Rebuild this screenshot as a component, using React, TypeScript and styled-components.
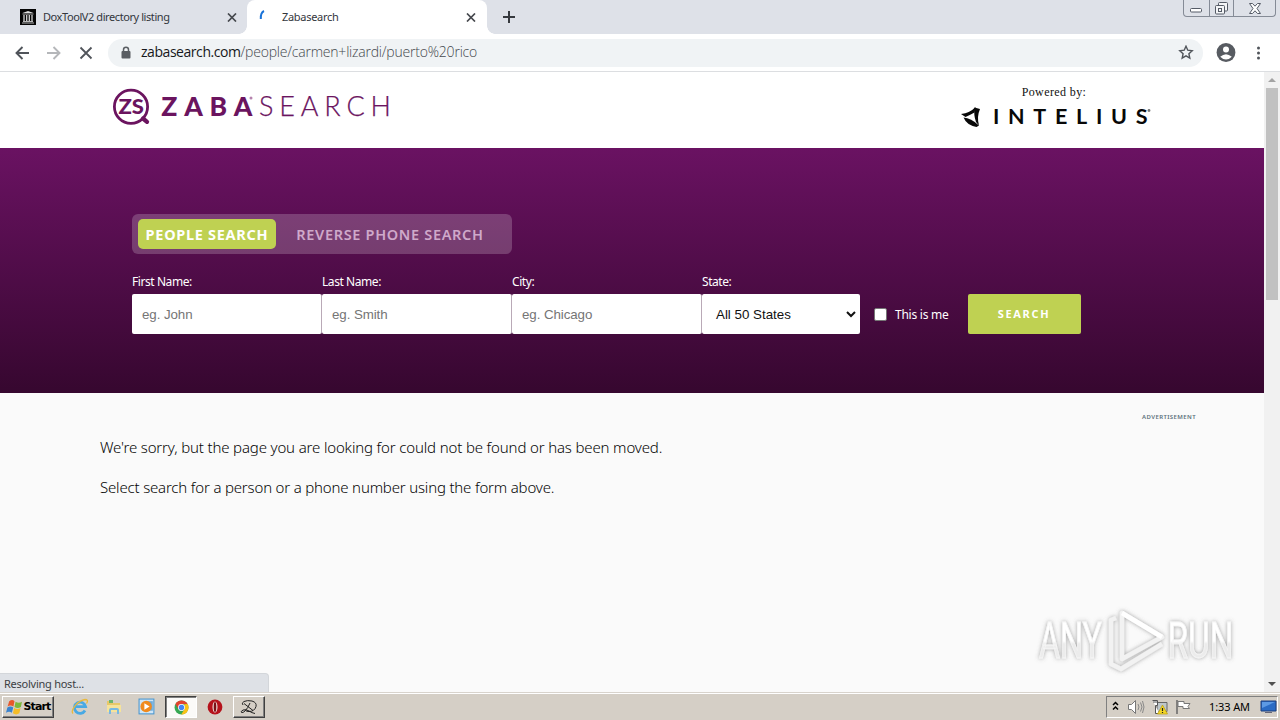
import React from "react";
import styled, { createGlobalStyle } from "styled-components";

const Global = createGlobalStyle`
  * { box-sizing: border-box; }
  html, body { margin: 0; padding: 0; overflow: hidden; }
  body { font-family: "Noto Sans", "Open Sans", sans-serif; }
  button, input { font: inherit; border: 0; padding: 0; margin: 0; background: none; }
`;

const Screen = styled.div`
  width: 1280px; height: 720px; display: flex; flex-direction: column; overflow: hidden;
  position: relative; background: #fafafa;
`;

/* Browser chrome */
const TabStrip = styled.div`
  height: 34px; flex: none; background: #dee1e8; display: flex; align-items: stretch;
`;
const Tab = styled.div<{ $active?: boolean; $w: number; $pad: number; $end: number }>`
  width: ${p => p.$w}px; display: flex; align-items: center; position: relative;
  padding: 0 ${p => p.$end}px 0 ${p => p.$pad}px;
  background: ${p => (p.$active ? "#fff" : "transparent")};
  border-radius: 8px 8px 0 0;
  svg { flex: none; display: block; }
  ${p => p.$active && `
    &::before, &::after { content: ""; position: absolute; bottom: 0; width: 8px; height: 8px; }
    &::before { left: -8px; background: radial-gradient(circle at 0 0, transparent 7.5px, #fff 8px); }
    &::after { right: -8px; background: radial-gradient(circle at 100% 0, transparent 7.5px, #fff 8px); }
  `}
`;
const TabTitle = styled.span<{ $ls?: number; $gap?: number }>`
  flex: 1; margin-left: ${p => p.$gap ?? 8}px; font: 11px/16px "Noto Sans", sans-serif; color: #33363c;
  letter-spacing: ${p => p.$ls ?? 0}px; white-space: nowrap;
`;
const NewTab = styled.div`
  width: 44px; display: flex; align-items: center; justify-content: center;
`;
const WindowButtons = styled.div`
  margin-left: auto; margin-right: 4px; height: 17px; width: 93px; display: flex;
  border: 1px solid #858b96; border-top: 0; border-radius: 0 0 4px 4px; overflow: hidden;
`;
const WindowButton = styled.div<{ $w: number }>`
  width: ${p => p.$w}px; display: flex; align-items: center; justify-content: center;
  & + & { border-left: 1px solid #858b96; }
`;
const Toolbar = styled.div`
  height: 38px; flex: none; background: #fff; border-bottom: 1px solid #dcdee1;
  display: flex; align-items: center; padding: 0 13px 0 12px;
`;
const NavIcon = styled.div`
  width: 20px; height: 20px; margin-right: 12px; display: flex; align-items: center; justify-content: center;
`;
const AddressBar = styled.div`
  width: 1095px; height: 28px; border-radius: 14px; background: #f0f3f5;
  display: flex; align-items: center; padding: 0 9px 0 12px;
`;
const Url = styled.span`
  flex: 1; margin-left: 9px; font: 300 14px/20px "Open Sans", sans-serif; color: #44484d;
  letter-spacing: -0.21px; white-space: nowrap; padding-bottom: 1px;
  b { font-weight: 400; color: #16181b; letter-spacing: -0.45px; }
`;
const ToolbarEnd = styled.div`
  flex: 1; display: flex; align-items: center; justify-content: space-between; padding-left: 13px;
`;

/* Page */
const Viewport = styled.div`height: 620px; flex: none; display: flex;`;
const Page = styled.main`width: 1264px; display: flex; flex-direction: column;`;
const Header = styled.header`
  height: 76px; background: #fff; display: flex; justify-content: space-between;
  padding: 12px 110px 0 110px;
`;
const Powered = styled.div`
  width: 200px; display: flex; flex-direction: column; align-items: center;
  span { font: 12px/16px "Liberation Serif", serif; color: #111; letter-spacing: 0.4px; }
  svg { display: block; margin-top: 4px; }
`;
const Hero = styled.section`
  height: 245px; padding: 66px 132px 0; color: #fff;
  background: linear-gradient(#6a1262, #36072f);
`;
const Modes = styled.div`
  width: 380px; height: 40px; border-radius: 6px; padding: 5px 6px; display: flex;
  background: rgba(255, 255, 255, 0.2);
`;
const Mode = styled.button<{ $on?: boolean; $w: number; $ls: number }>`
  width: ${p => p.$w}px; height: 30px; border-radius: 5px; text-align: center; white-space: nowrap;
  background: ${p => (p.$on ? "#bfd152" : "transparent")};
  color: ${p => (p.$on ? "#fff" : "#cfa9ca")};
  font: ${p => (p.$on ? 700 : 600)} 14.5px/31px "Noto Sans", sans-serif; letter-spacing: ${p => p.$ls}px;
`;
const Form = styled.div`display: flex; margin-top: 19px; align-items: flex-end;`;
const Field = styled.label<{ $w: number }>`
  width: ${p => p.$w}px; display: flex; flex-direction: column;
`;
const FieldLabel = styled.span`
  font: 12px/17px "Noto Sans", sans-serif; letter-spacing: -0.43px; margin-bottom: 4px; white-space: nowrap;
`;
const Input = styled.input`
  height: 40px; width: 100%; background: #fff; border-right: 1px solid #b9a9b7; border-radius: 2px;
  padding: 0 10px; font: 13.33px "Liberation Sans", Arial, sans-serif; letter-spacing: -0.08px;
  &::placeholder { color: #757575; opacity: 1; }
`;
const SelectBox = styled.div`
  height: 40px; background: #fff; border-radius: 2px; color: #111; display: flex; align-items: center;
  justify-content: space-between; padding: 0 4px 0 14px;
  font: 13.33px "Liberation Sans", Arial, sans-serif; letter-spacing: 0;
`;
const ThisIsMe = styled.div`
  height: 40px; width: 108px; padding-left: 14px; display: flex; align-items: center; gap: 8px;
  font: 12px/17px "Noto Sans", sans-serif; white-space: nowrap; letter-spacing: -0.25px;
`;
const Check = styled.span`
  width: 13px; height: 13px; background: #fff; border: 1px solid #767676; border-radius: 2px; flex: none;
`;
const SearchButton = styled.button`
  width: 113px; height: 40px; border-radius: 2px; background: #bfd152; color: #fff;
  font: 700 11px/40px "Noto Sans", sans-serif; letter-spacing: 1.7px; padding-right: 1px; text-align: center;
`;
const Body = styled.section`flex: 1; background: #fafafa; padding: 19px 68px 0 100px;`;
const Advert = styled.div`
  font: 600 6px/10px "Noto Sans", sans-serif; letter-spacing: 0.4px; text-align: right; color: #5d727c;
`;
const Message = styled.p<{ $ls: number }>`
  margin: 0; height: 40px; font: 300 15px/20px "Noto Sans", "Open Sans", sans-serif; color: #050505;
  letter-spacing: ${p => p.$ls}px; white-space: nowrap;
`;
const Messages = styled.div`padding-top: 15px;`;
const Scrollbar = styled.div`
  width: 16px; background: #f1f1f1; display: flex; flex-direction: column; align-items: center;
`;
const Arrow = styled.div<{ $down?: boolean }>`
  height: 16px; display: flex; align-items: center;
  &::before {
    content: ""; border: 4px solid transparent; border-top-width: ${p => (p.$down ? 4 : 0)}px;
    border-bottom-width: ${p => (p.$down ? 0 : 4)}px;
    ${p => (p.$down ? "border-top-color: #505050" : "border-bottom-color: #a3a3a3")};
  }
`;
const Thumb = styled.div`width: 12px; height: 212px; background: #c1c1c1; margin-bottom: auto;`;

/* Overlays */
const Status = styled.div`
  position: absolute; left: 0; top: 673px; width: 269px; height: 19px; background: #dee1e6;
  border-radius: 0 4px 0 0; padding-left: 4px; font: 11px/19px "Noto Sans", sans-serif; color: #3c4043;
  border-top: 1px solid #d3d6da; border-right: 1px solid #d3d6da; letter-spacing: -0.25px;
`;
const Watermark = styled.svg`position: absolute; left: 1030px; top: 598px;`;

/* Taskbar */
const Taskbar = styled.div`
  height: 28px; flex: none; background: #d5cfc6; border-top: 1px solid #d8d3cc;
  box-shadow: inset 0 1px #fff; display: flex; align-items: center; padding: 1px 2px 0 2px;
`;
const TaskButton = styled.div<{ $w: number; $ml?: number; $kind?: "raised" | "pressed" }>`
  width: ${p => p.$w}px; height: 22px; margin-left: ${p => p.$ml ?? 0}px; flex: none;
  display: flex; align-items: center; justify-content: center;
  background: ${p => (p.$kind === "pressed" ? "#fbfaf8" : "transparent")};
  border: ${p => (p.$kind ? 1 : 0)}px solid;
  border-color: ${p => (p.$kind === "pressed" ? "#404040 #fff #fff #404040" : "#fff #404040 #404040 #fff")};
  box-shadow: ${p => (p.$kind === "raised" ? "inset -1px -1px #808080" : p.$kind ? "inset 1px 1px #808080" : "none")};
  svg { display: block; }
`;
const StartText = styled.span`
  font: 700 11px/18px "DejaVu Sans", sans-serif; color: #000; letter-spacing: -0.9px; margin-left: 1px;
`;
const Tray = styled.div`
  margin-left: auto; width: 172px; height: 22px; border: 1px solid; border-color: #808080 #fff #fff #808080;
  display: flex; align-items: center; padding: 0 0 0 4px;
  svg { display: block; flex: none; }
`;
const TrayIcon = styled.svg`margin-left: 6px;`;
const Clock = styled.span`
  font: 11px/18px "Noto Sans", sans-serif; color: #000; margin-left: auto; margin-right: 10px;
  letter-spacing: -0.1px; white-space: nowrap;
`;

const TabClose = () => (
  <svg width="14" height="9">
    <g transform="translate(3 .5)"><path d="M0 0l8 8M8 0 0 8" stroke="#45484d" strokeWidth="1.700" /></g>
  </svg>
);

const MuseumIcon = () => (
  <svg width="16" height="16" viewBox="0 0 16 16">
    <rect width="16" height="16" fill="#050505" />
    <path d="M2.500 4 8 2l5.500 2z" fill="#ddd" />
    <path d="M2.500 5h11M2 14h12M3 12.500h10" stroke="#ccc" strokeWidth=".9" />
    <path d="M4 6v6M6.700 6v6M9.300 6v6M12 6v6" stroke="#d5d5d5" strokeWidth="1.300" />
  </svg>
);

const ZabaLogo = () => (
  <svg width="282" height="46" viewBox="0 0 282 46">
    <g stroke="#6b145f" fill="none">
      <circle cx="21" cy="22.700" r="16.600" strokeWidth="2.800" />
      <path d="M33 34.500l4 3.300" strokeWidth="4.300" strokeLinecap="round" />
    </g>
    <g fill="#6b145f" fontFamily="Lato, sans-serif">
      <text x="8.500" y="29.800" fontSize="20" fontWeight="900" textLength="25.500" lengthAdjust="spacingAndGlyphs">ZS</text>
      <text x="51.300" y="32" fontSize="26.500" fontWeight="900" textLength="91">ZABA</text>
      <text x="149" y="32" fontSize="27" fontWeight="300" stroke="#6b145f" strokeWidth=".25" textLength="132">SEARCH</text>
      <circle cx="141" cy="14" r="1.500" fill="#b684ae" />
    </g>
  </svg>
);

const InteliusLogo = () => (
  <svg width="200" height="26" viewBox="0 0 200 26">
    <g fill="#080808">
      <path d="M7 10Q16 9 21.500 3L20.500 8.500Q16 11 11.500 13z" />
      <path d="M20.500 3.500L26 5Q22.500 13 25 21.500L22 18Q19.500 11 20.500 3.500z" />
      <path d="M9.500 13.500Q17 14 25 21.500L22.500 23Q12.500 21 9.500 13.500z" />
    </g>
    <text x="39" y="20" fontFamily="Lato, sans-serif" fontWeight="700" fontSize="21.500" textLength="154.500" fill="#080808">INTELIUS</text>
    <circle cx="195" cy="6.500" r="1.400" fill="#777" />
  </svg>
);

const AnyRun = () => (
  <Watermark width="222" height="84" viewBox="0 0 222 84">
    <defs>
      <linearGradient id="face" x1="0" y1="0" x2="0" y2="1">
        <stop offset=".5" stopColor="#fff" />
        <stop offset=".55" stopColor="#ececec" />
      </linearGradient>
      <filter id="glow" x="-10%" y="-20%" width="120%" height="140%">
        <feDropShadow dx="0" dy="0" stdDeviation="2" floodColor="#666" floodOpacity=".6" />
      </filter>
    </defs>
    <g filter="url(#glow)">
      <g fill="url(#face)" stroke="#f6f6f6" strokeWidth=".8" fontFamily="Roboto, sans-serif" fontWeight="400" fontSize="50">
        <text x="9" y="60" textLength="63" lengthAdjust="spacingAndGlyphs">ANY</text>
        <text x="137.500" y="60" textLength="66" lengthAdjust="spacingAndGlyphs">RUN</text>
      </g>
      <g fill="none" stroke="#f2f2f2" strokeWidth="4.500" strokeLinejoin="round">
        <path d="M86 20L81 22V66L91 71L132 46" />
        <path d="M92 15V61L132 39z" />
        <path d="M92 15L132 39" stroke="#fff" />
      </g>
    </g>
  </Watermark>
);

const StartFlag = () => (
  <svg width="17" height="17" viewBox="0 0 16 16">
    <path d="M3 2q3-2 5 0L7 7Q4 5 1.500 7z" fill="#e8582b" />
    <path d="M9 2.500q3 2 6 0L14 7.500q-3 2-6 0z" fill="#7cb93b" />
    <path d="M1.300 8q3-2 5.500 0L5.500 13Q3 11 0 13z" fill="#3a83cf" />
    <path d="M7.700 8.500q3 2 6 0L12.500 13.500q-3 2-6 0z" fill="#f5bd27" />
  </svg>
);

const IeIcon = () => (
  <svg width="18" height="18" viewBox="0 0 18 18" fill="none">
    <path d="M14 12.500A5.600 5.600 0 1 1 14.600 8.700H5" stroke="#48a9e4" strokeWidth="2.800" />
    <path d="M2 15.500C-1 12 7 2.500 14 1.500q4 0 1.500 4" stroke="#e9b93c" strokeWidth="1.300" />
  </svg>
);

const FolderIcon = () => (
  <svg width="18" height="18" viewBox="0 0 18 18">
    <path d="M2 3h5l1 2h7v9H2z" fill="#e8c868" /><path d="M4 2h4v3H4z" fill="#6cb56a" />
    <path d="M2 7h14v7H2z" fill="#f6e39a" />
    <path d="M4 16v-4q0-2 2-2h6q2 0 2 2v4h-2v-4H6v4z" fill="#77b9e2" />
  </svg>
);

const MediaIcon = () => (
  <svg width="18" height="18" viewBox="0 0 17 17">
    <rect x="1" y="1" width="14" height="14" fill="#cfe6f7" stroke="#4a96cf" />
    <path d="M9 3h5v9H9z" fill="#6aabdc" /><circle cx="7.700" cy="8" r="5.400" fill="#f08a1d" />
    <path d="M6 5l5 3-5 3z" fill="#fff" />
  </svg>
);

const ChromeIcon = () => (
  <svg width="15" height="15" viewBox="0 0 14 14">
    <circle cx="7" cy="7" r="6.500" fill="#36a853" />
    <path d="M1.300 3.800A6.500 6.500 0 0 1 12.700 3.800H7L4.300 8.600z" fill="#e2432f" />
    <path d="M12.700 3.800A6.500 6.500 0 0 1 6.700 13.500L9.800 8.600 9.500 4z" fill="#fbc116" />
    <circle cx="7" cy="7" r="3.200" fill="#fff" /><circle cx="7" cy="7" r="2.500" fill="#4285f4" />
  </svg>
);

const OperaIcon = () => (
  <svg width="16" height="16" viewBox="0 0 16 16">
    <ellipse cx="8" cy="8" rx="7.400" ry="7.500" fill="#b5121b" />
    <ellipse cx="8" cy="8" rx="2.500" ry="5.500" fill="#f0dcd8" />
    <ellipse cx="8" cy="8" rx="1.300" ry="5" fill="#7a1015" />
  </svg>
);

const ScriptIcon = () => (
  <svg width="18" height="16" viewBox="0 0 18 16" fill="none" stroke="#222" strokeWidth="1">
    <path d="M3 6Q1 4 4 2.500T12 2q5 1.500 4 5.500-1.500 5-7 5-2.500 0-3.500-1M10 4Q8 9 5 12q-2 2-3.500 1.500T3 11q3-1 6 1t6 2.500M4 4.500l9 7" />
  </svg>
);

const TrayIcons = () => (
  <>
    <svg width="10" height="16" viewBox="0 0 10 16" fill="none" stroke="#000" strokeWidth="1.500">
      <path d="M2 6l2.500-2.500L7 6M2 10.500 4.500 8 7 10.500" />
    </svg>
    <TrayIcon width="18" height="16" viewBox="0 0 18 16" fill="none" stroke="#777">
      <path d="M1.500 5.500h3l4-4v13l-4-4h-3z" fill="#fff" />
      <path d="M11 5q2 3 0 6M13.500 3.500q3 4.500 0 9M15.500 2q3 6 0 12" stroke="#888" />
    </TrayIcon>
    <TrayIcon width="18" height="16" viewBox="0 0 18 16">
      <path d="M6 3.500h10v9H6z" fill="#bfc7ca" stroke="#666" />
      <path d="M1.500 1.500h5v5h-2v8h4M3 1v3M5 1v3" fill="#fff" stroke="#555" />
      <path d="M11.500 6l5 9h-10z" fill="#f3d625" stroke="#b99b0a" strokeWidth=".7" />
      <path d="M11.500 9v3M11.500 13v1" stroke="#222" strokeWidth="1.200" />
    </TrayIcon>
    <TrayIcon width="18" height="16" viewBox="0 0 18 16">
      <path d="M2 1v14" stroke="#666" strokeWidth="1.500" />
      <path d="M3 2.500h6v2h6l-2 3 1.500 2H8v-2H3z" fill="#fff" stroke="#777" />
    </TrayIcon>
  </>
);

const fields = [
  { label: "First Name:", hint: "eg. John" },
  { label: "Last Name:", hint: "eg. Smith" },
  { label: "City:", hint: "eg. Chicago" },
];

export default function App() {
  return (
    <Screen>
      <Global />
      <TabStrip>
        <Tab $w={247} $pad={20} $end={8}>
          <MuseumIcon />
          <TabTitle $ls={-0.42} $gap={7}>DoxToolV2 directory listing</TabTitle>
          <TabClose />
        </Tab>
        <Tab $w={240} $pad={11} $end={9} $active>
          <svg width="16" height="16" viewBox="0 0 16 16" fill="none">
            <path d="M6 2Q2.500 3.500 2.800 10" stroke="#1a73d8" strokeWidth="2" />
          </svg>
          <TabTitle $ls={-0.3}>Zabasearch</TabTitle>
          <TabClose />
        </Tab>
        <NewTab>
          <svg width="12" height="12" stroke="#36393e" strokeWidth="2"><path d="M6 0v12M0 6h12" /></svg>
        </NewTab>
        <WindowButtons>
          <WindowButton $w={25}>
            <svg width="12" height="16" fill="#fff" stroke="#555b66"><rect x=".5" y="8.500" width="11" height="3.500" rx="1" /></svg>
          </WindowButton>
          <WindowButton $w={25}>
            <svg width="13" height="13" fill="#f4f5f7" stroke="#555b66">
              <rect x="3.500" y=".5" width="9" height="8.500" rx="1" /><rect x=".5" y="3.500" width="9" height="8.500" rx="1" />
              <rect x="3.500" y="6.500" width="3" height="3" />
            </svg>
          </WindowButton>
          <WindowButton $w={42}>
            <svg width="12" height="11" viewBox="0 0 12 11" fill="#fff" stroke="#555b66">
              <path d="M.5.5h3L6 3.200 8.500.5h3L8 5.500l3.500 5h-3L6 7.800 3.500 10.500h-3L4 5.500z" />
            </svg>
          </WindowButton>
        </WindowButtons>
      </TabStrip>
      <Toolbar>
        <NavIcon>
          <svg width="14" height="14" fill="none" stroke="#50545a" strokeWidth="1.900"><path d="M14 7H1.500M7.500 1l-6 6 6 6" /></svg>
        </NavIcon>
        <NavIcon>
          <svg width="14" height="14" fill="none" stroke="#b5b7ba" strokeWidth="1.900"><path d="M0 7h12.500M6.500 1l6 6-6 6" /></svg>
        </NavIcon>
        <NavIcon>
          <svg width="14" height="14" stroke="#50545a" strokeWidth="1.800"><path d="M1.500 1.500l11 11M12.500 1.500l-11 11" /></svg>
        </NavIcon>
        <AddressBar>
          <svg width="12" height="14" viewBox="0 0 12 14">
            <path d="M3.500 6V3.800a2.500 2.500 0 0 1 5 0V6" fill="none" stroke="#5a5e63" strokeWidth="1.500" />
            <rect x="1.500" y="5" width="9" height="7.500" rx="1" fill="#5a5e63" />
          </svg>
          <Url><b>zabasearch.com</b>/people/carmen+lizardi/puerto%20rico</Url>
          <svg width="16" height="16" viewBox="0 0 16 16" fill="none" stroke="#50545a" strokeWidth="1.400">
            <path d="M8 1.200l1.800 4 4.400.5-3.300 3 .9 4.300L8 10.800l-3.800 2.200.9-4.300-3.300-3 4.400-.5z" />
          </svg>
        </AddressBar>
        <ToolbarEnd>
          <svg width="20" height="20" viewBox="0 0 20 20">
            <circle cx="10" cy="9.500" r="9.400" fill="#575b61" /><circle cx="10" cy="6.500" r="3" fill="#fff" />
            <path d="M4.200 13.700q5.800-5 11.600 0Q10 19.500 4.200 13.700z" fill="#fff" />
          </svg>
          <svg width="17" height="14" fill="#50545a"><circle cx="8.500" cy="2" r="1.500" /><circle cx="8.500" cy="7" r="1.500" /><circle cx="8.500" cy="12" r="1.500" /></svg>
        </ToolbarEnd>
      </Toolbar>
      <Viewport>
        <Page>
          <Header>
            <ZabaLogo />
            <Powered><span>Powered by:</span><InteliusLogo /></Powered>
          </Header>
          <Hero>
            <Modes>
              <Mode $on $w={138} $ls={0.7}>PEOPLE SEARCH</Mode>
              <Mode $w={228} $ls={0.68}>REVERSE PHONE SEARCH</Mode>
            </Modes>
            <Form>
              {fields.map(f => (
                <Field key={f.label} $w={190}>
                  <FieldLabel>{f.label}</FieldLabel>
                  <Input placeholder={f.hint} />
                </Field>
              ))}
              <Field $w={158} as="div">
                <FieldLabel>State:</FieldLabel>
                <SelectBox>
                  All 50 States
                  <svg width="10" height="7" fill="none" stroke="#111" strokeWidth="2"><path d="M1 1l4 4 4-4" /></svg>
                </SelectBox>
              </Field>
              <ThisIsMe><Check />This is me</ThisIsMe>
              <SearchButton>SEARCH</SearchButton>
            </Form>
          </Hero>
          <Body>
            <Advert>ADVERTISEMENT</Advert>
            <Messages>
              <Message $ls={-0.15}>We're sorry, but the page you are looking for could not be found or has been moved.</Message>
              <Message $ls={-0.18}>Select search for a person or a phone number using the form above.</Message>
            </Messages>
          </Body>
        </Page>
        <Scrollbar><Arrow /><Thumb /><Arrow $down /></Scrollbar>
      </Viewport>
      <Taskbar>
        <TaskButton $w={52} $kind="raised"><StartFlag /><StartText>Start</StartText></TaskButton>
        <TaskButton $w={32} $ml={10}><IeIcon /></TaskButton>
        <TaskButton $w={32} $ml={2}><FolderIcon /></TaskButton>
        <TaskButton $w={32} $ml={1}><MediaIcon /></TaskButton>
        <TaskButton $w={32} $ml={2} $kind="pressed"><ChromeIcon /></TaskButton>
        <TaskButton $w={32} $ml={2}><OperaIcon /></TaskButton>
        <TaskButton $w={32} $ml={2} $kind="raised"><ScriptIcon /></TaskButton>
        <Tray>
          <TrayIcons />
          <Clock>1:33 AM</Clock>
          <svg width="17" height="16" viewBox="0 0 17 16">
            <path d="M1 2h15v10H1z" fill="#2a6bc4" stroke="#1c3f7c" /><path d="M2 3h13L2 9z" fill="#5d9ae4" />
            <path d="M5 13.500h7" stroke="#667" />
          </svg>
        </Tray>
      </Taskbar>
      <AnyRun />
      <Status>Resolving host...</Status>
    </Screen>
  );
}
